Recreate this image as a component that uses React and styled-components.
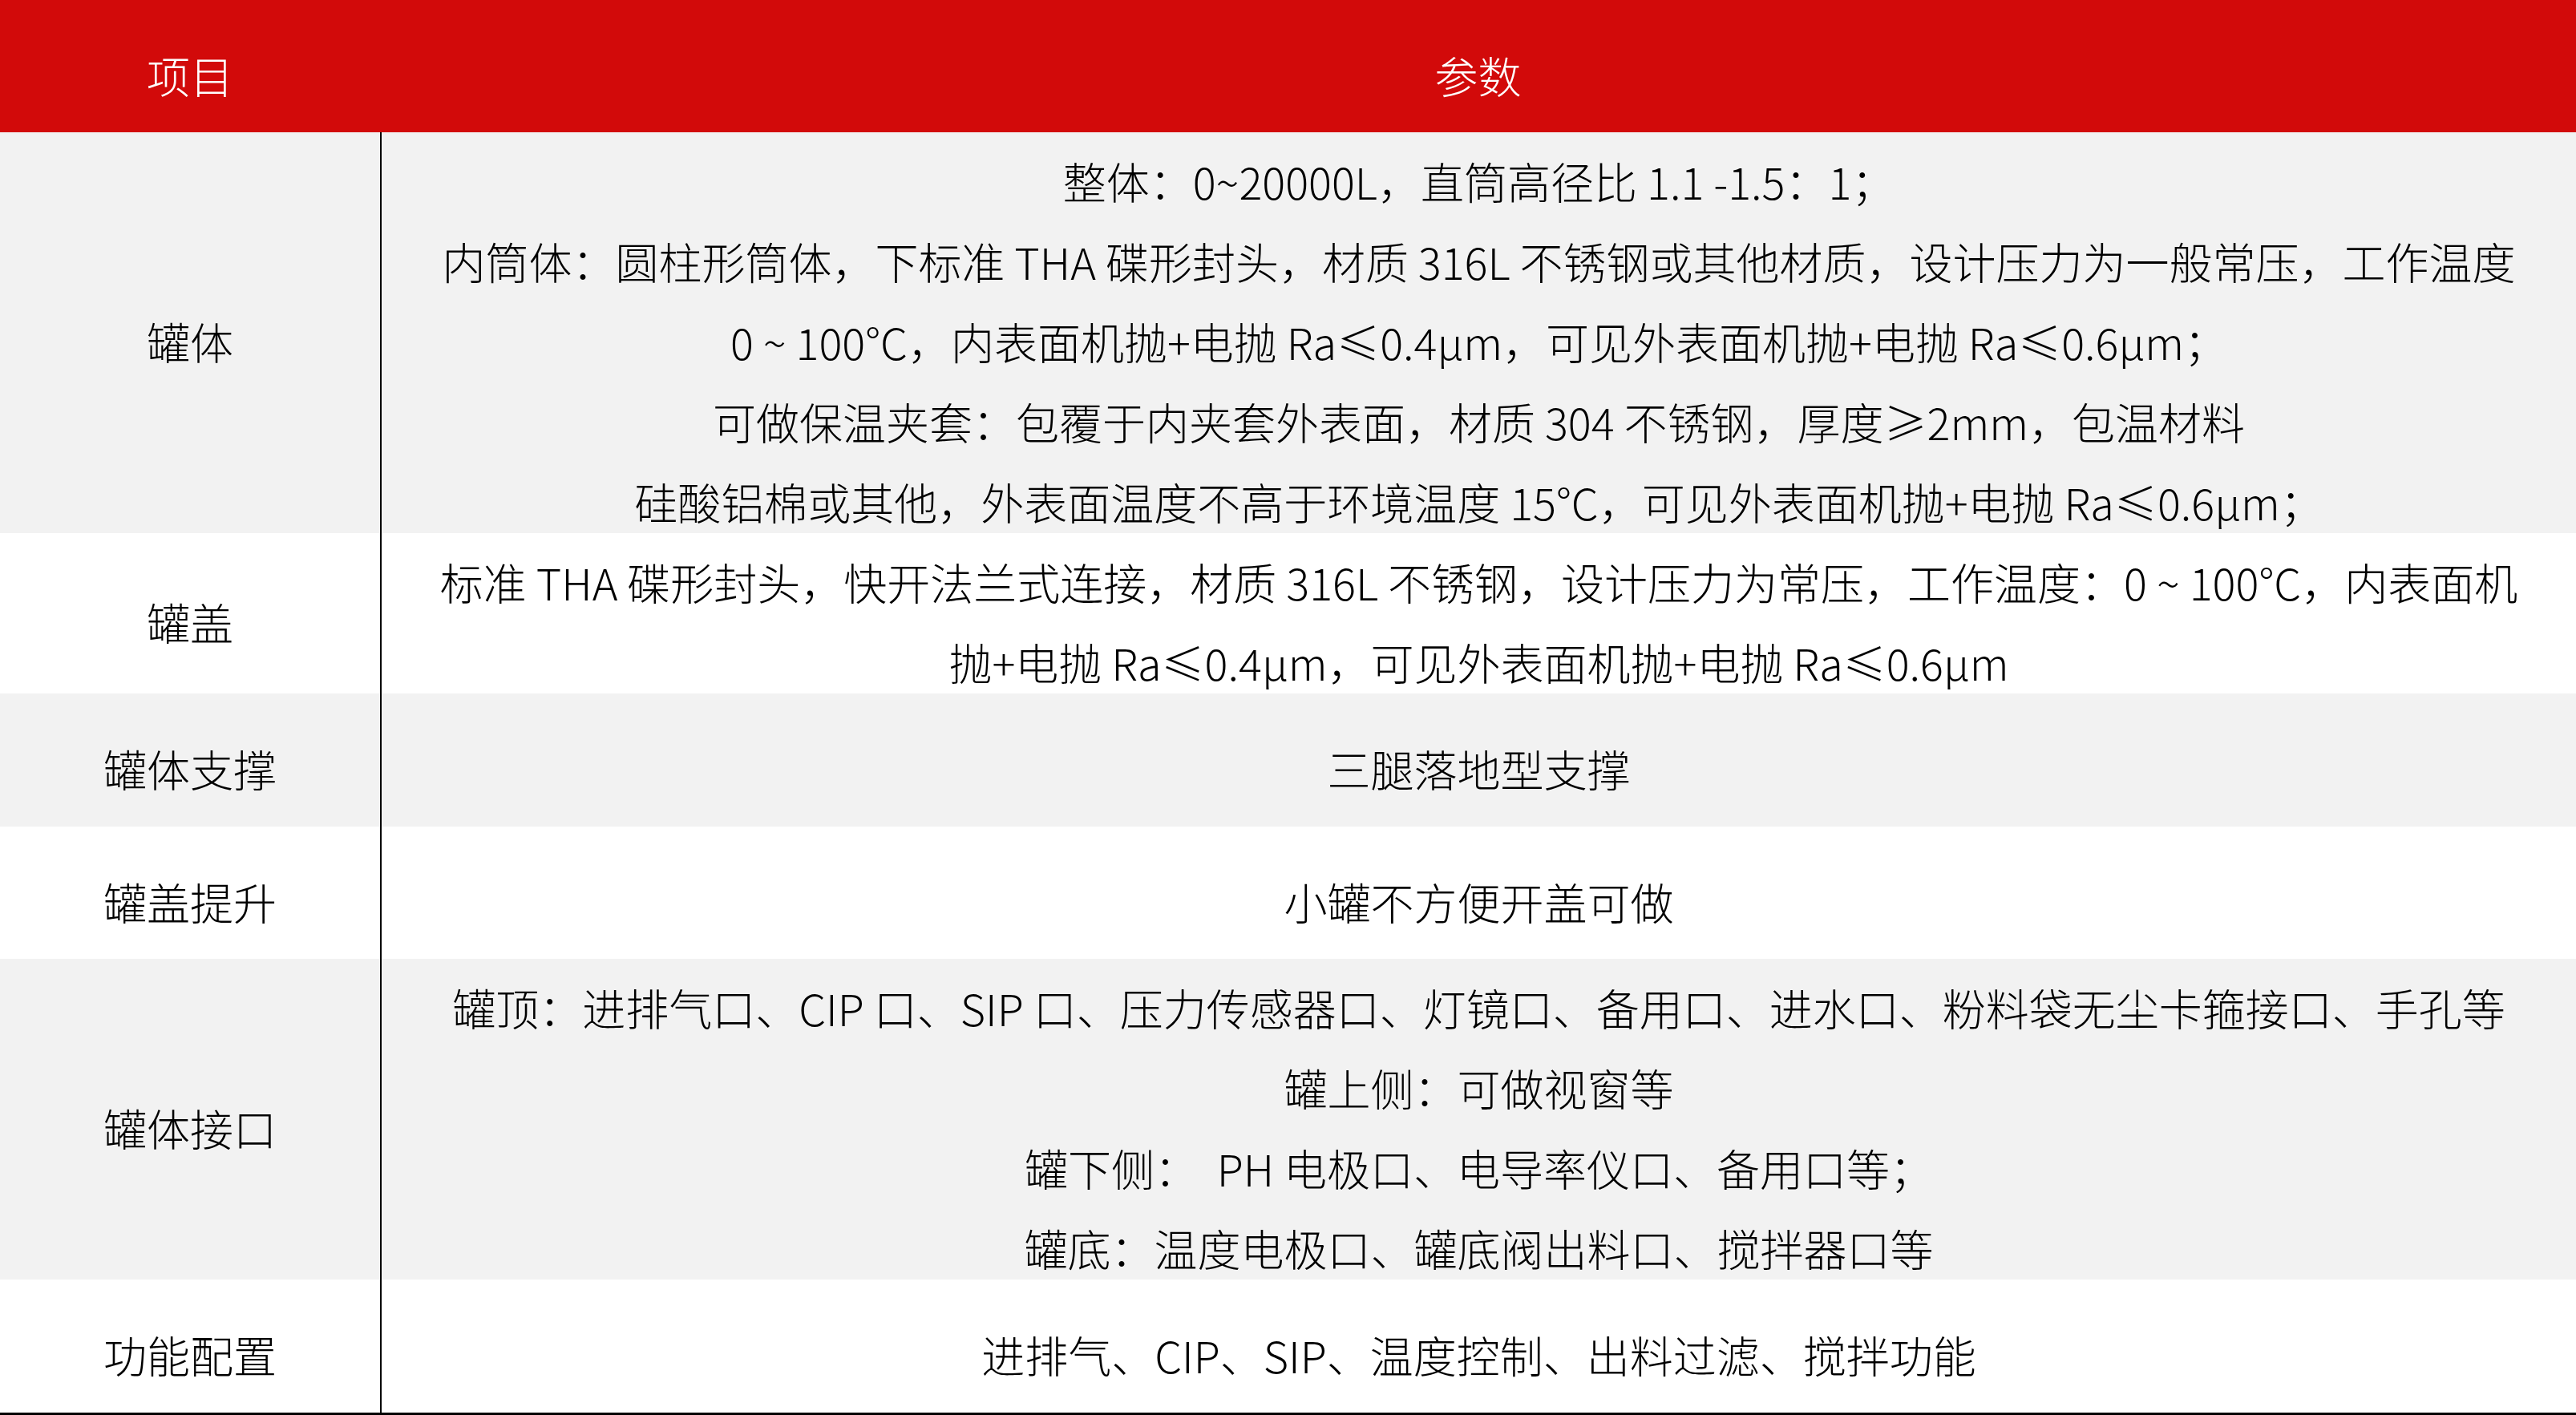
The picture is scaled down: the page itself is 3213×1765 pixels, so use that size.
import React from 'react';
import styled, { createGlobalStyle } from 'styled-components';

const GlobalStyle = createGlobalStyle`
    html, body {
        margin: 0;
        padding: 0;
        background: #ffffff;
    }
    body {
        font-family: "Noto Sans CJK SC Light", "Noto Sans CJK SC", "Noto Sans", sans-serif;
        font-weight: 300;
    }
`;

const rows = [
    {
        name: '罐体',
        height: 500,
        shade: true,
        lines: [
            '整体：0~20000L，直筒高径比 1.1 -1.5：1；',
            '内筒体：圆柱形筒体，下标准 THA 碟形封头，材质 316L 不锈钢或其他材质，设计压力为一般常压，工作温度',
            '0 ~ 100°C，内表面机抛+电抛 Ra≤0.4μm，可见外表面机抛+电抛 Ra≤0.6μm；',
            '可做保温夹套：包覆于内夹套外表面，材质 304 不锈钢，厚度≥2mm，包温材料',
            '硅酸铝棉或其他，外表面温度不高于环境温度 15°C，可见外表面机抛+电抛 Ra≤0.6μm；',
        ],
    },
    {
        name: '罐盖',
        height: 200,
        shade: false,
        lines: [
            '标准 THA 碟形封头，快开法兰式连接，材质 316L 不锈钢，设计压力为常压，工作温度：0 ~ 100°C，内表面机',
            '抛+电抛 Ra≤0.4μm，可见外表面机抛+电抛 Ra≤0.6μm',
        ],
    },
    {
        name: '罐体支撑',
        height: 166,
        shade: true,
        lines: ['三腿落地型支撑'],
    },
    {
        name: '罐盖提升',
        height: 165,
        shade: false,
        lines: ['小罐不方便开盖可做'],
    },
    {
        name: '罐体接口',
        height: 400,
        shade: true,
        lines: [
            '罐顶：进排气口、CIP 口、SIP 口、压力传感器口、灯镜口、备用口、进水口、粉料袋无尘卡箍接口、手孔等',
            '罐上侧：可做视窗等',
            '罐下侧：  PH 电极口、电导率仪口、备用口等；',
            '罐底：温度电极口、罐底阀出料口、搅拌器口等',
        ],
    },
    {
        name: '功能配置',
        height: 166,
        shade: false,
        lines: ['进排气、CIP、SIP、温度控制、出料过滤、搅拌功能'],
    },
];

const App = () => {
    return (
        <>
            <GlobalStyle />
            <Table>
                <HeaderRow $h={165}>
                    <Cell>项目</Cell>
                    <Cell>参数</Cell>
                </HeaderRow>
                {rows.map((row) => (
                    <Row key={row.name} $h={row.height} $shade={row.shade}>
                        <Cell>{row.name}</Cell>
                        <ValueCell>
                            {row.lines.map((line, i) => (
                                <Line key={i}>{line}</Line>
                            ))}
                        </ValueCell>
                    </Row>
                ))}
            </Table>
        </>
    );
};

export default App;

const Table = styled.div`
    width: 3213px;
    display: flex;
    flex-direction: column;
    border-bottom: 3px solid #000000;
    color: #000000;
`;

const Row = styled.div`
    display: grid;
    grid-template-columns: 474px 1fr;
    grid-template-rows: 100%;
    height: ${({ $h }) => $h}px;
    background-color: ${({ $shade }) => ($shade ? '#f2f2f2' : '#ffffff')};
`;

const HeaderRow = styled(Row)`
    background-color: #d20a0a;
    color: #ffffff;
`;

const Cell = styled.div`
    display: flex;
    flex-direction: column;
    align-items: center;
    justify-content: center;
    padding-top: 22px;
    box-sizing: border-box;
    font-size: 54px;
    line-height: 100px;
    white-space: pre;
    min-width: 0;
    min-height: 0;
`;

const ValueCell = styled(Cell)`
    border-left: 2px solid #000000;
`;

const Line = styled.div`
    flex-shrink: 0;
    white-space: pre;
`;
